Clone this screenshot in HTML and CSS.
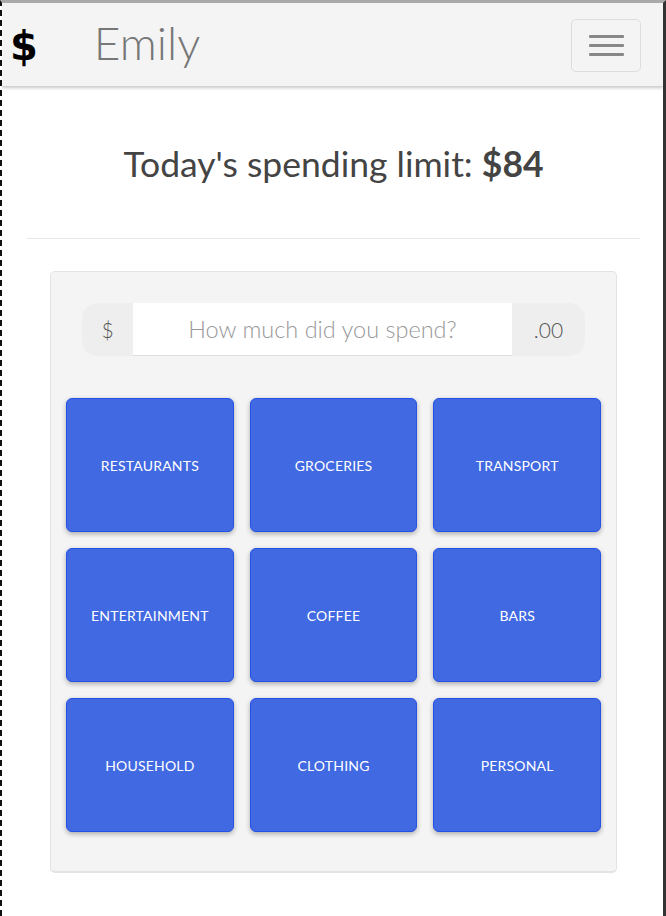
FILE: index.html
```html
<!DOCTYPE html>
<html>
<head>
<meta charset="utf-8">
<link rel="stylesheet" href="styles.css">
</head>
<body>
<div class="frame">
  <nav class="navbar">
    <div class="brand">
      <span class="logo">$</span>
      <span class="name">Emily</span>
    </div>
    <button class="toggle" aria-label="menu">
      <span class="bar"></span><span class="bar"></span><span class="bar"></span>
    </button>
  </nav>
  <main class="container">
    <h1 class="limit">Today's spending limit: <strong>$84</strong></h1>
    <hr class="rule">
    <section class="well">
      <div class="input-group">
        <span class="addon addon-left">$</span>
        <input class="amount" type="text" placeholder="How much did you spend?">
        <span class="addon addon-right">.00</span>
      </div>
      <div class="grid">
        <button class="cat">Restaurants</button>
        <button class="cat">Groceries</button>
        <button class="cat">Transport</button>
        <button class="cat">Entertainment</button>
        <button class="cat">Coffee</button>
        <button class="cat">Bars</button>
        <button class="cat">Household</button>
        <button class="cat">Clothing</button>
        <button class="cat">Personal</button>
      </div>
    </section>
  </main>
</div>
</body>
</html>
```
FILE: styles.css
```css
html, body {
  margin: 0;
  padding: 0;
  background: #fff;
}
body {
  font-family: Lato, "Open Sans", sans-serif;
}
.frame {
  box-sizing: border-box;
  width: 666px;
  height: 916px;
  border-top: 3px solid #a9a9a9;
  border-left: 2px dashed #111;
  border-right: 3px solid #333;
  overflow: hidden;
}
.navbar {
  height: 83px;
  background: #f4f4f4;
  box-shadow: 0 2px 3px rgba(0,0,0,0.22);
  display: flex;
  align-items: center;
  justify-content: space-between;
  padding: 0 22px 0 8px;
  position: relative;
}
.brand {
  display: flex;
  align-items: center;
  gap: 56px;
}
.logo {
  font-family: "DejaVu Sans", sans-serif;
  font-weight: 700;
  font-size: 40px;
  color: #000;
  line-height: 1;
  margin-top: 2px;
}
.name {
  font-family: Lato, sans-serif;
  font-weight: 300;
  font-size: 46px;
  color: #777;
  line-height: 1;
  margin-top: -4px;
}
.toggle {
  width: 70px;
  height: 53px;
  border: 1px solid #ddd;
  border-radius: 5px;
  background: #f4f4f4;
  display: flex;
  flex-direction: column;
  align-items: center;
  justify-content: center;
  gap: 6px;
  padding: 0;
  margin-top: 2px;
}
.bar {
  display: block;
  width: 35px;
  height: 3px;
  border-radius: 1px;
  background: #888;
}
.container {
  padding: 0 23px 0 25px;
}
.limit {
  margin: 56px 0 0;
  text-align: center;
  font-weight: 400;
  font-size: 35.5px;
  color: #444;
  line-height: 44px;
}
.limit strong {
  font-weight: 700;
}
.rule {
  border: 0;
  border-top: 1px solid #e8e8e8;
  margin: 52px 0 32px;
}
.well {
  margin: 0 23px;
  background: #f4f4f4;
  border: 1px solid #e3e3e3;
  border-bottom-width: 2px;
  border-radius: 5px;
  padding: 31px 15px 39px;
}
.input-group {
  display: flex;
  height: 53px;
  margin: 0 16px;
}
.addon {
  display: flex;
  align-items: center;
  justify-content: center;
  background: #eeeeee;
  color: #555;
  font-size: 21px;
  font-weight: 300;
}
.addon-left {
  width: 51px;
  border-radius: 16px 0 0 16px;
}
.addon-right {
  width: 73px;
  border-radius: 0 16px 16px 0;
}
.amount {
  flex: 1;
  min-width: 0;
  border: 0;
  border-bottom: 1px solid #ddd;
  background: #fff;
  text-align: center;
  font-family: Lato, sans-serif;
  font-weight: 300;
  font-size: 23.5px;
  color: #555;
  padding: 0;
  outline: none;
}
.amount::placeholder {
  color: #999;
}
.grid {
  margin-top: 42px;
  display: grid;
  grid-template-columns: repeat(3, 1fr);
  gap: 16px;
}
.cat {
  height: 134px;
  background: #4169e1;
  border: 1px solid #2451e6;
  border-radius: 6px;
  box-shadow: 0 2px 5px rgba(0,0,0,0.3);
  color: #fff;
  font-family: Lato, sans-serif;
  font-size: 14px;
  text-transform: uppercase;
  letter-spacing: 0.2px;
  padding: 0;
}
```
